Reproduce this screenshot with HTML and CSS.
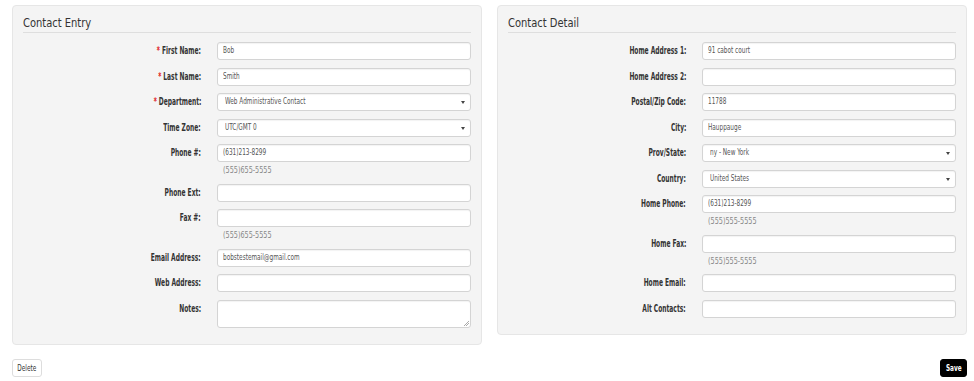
FILE: index.html
```html
<!DOCTYPE html>
<html>
<head>
<meta charset="utf-8">
<link rel="stylesheet" href="styles.css">
</head>
<body>
<div class="page">
  <div class="panels">
    <section class="panel">
      <h2 class="panel-title"><span class="cx">Contact Entry</span></h2>
      <div class="row"><label class="lbl"><span class="cx"><span class="req">*</span> First Name:</span></label><div class="ctl"><div class="input"><span class="cx">Bob</span></div></div></div>
      <div class="row"><label class="lbl"><span class="cx"><span class="req">*</span> Last Name:</span></label><div class="ctl"><div class="input"><span class="cx">Smith</span></div></div></div>
      <div class="row"><label class="lbl"><span class="cx"><span class="req">*</span> Department:</span></label><div class="ctl"><div class="input select"><span class="cx">Web Administrative Contact</span></div></div></div>
      <div class="row"><label class="lbl"><span class="cx">Time Zone:</span></label><div class="ctl"><div class="input select"><span class="cx">UTC/GMT 0</span></div></div></div>
      <div class="row"><label class="lbl"><span class="cx">Phone #:</span></label><div class="ctl"><div class="input"><span class="cx">(631)213-8299</span></div><div class="help"><span class="cx">(555)655-5555</span></div></div></div>
      <div class="row"><label class="lbl"><span class="cx">Phone Ext:</span></label><div class="ctl"><div class="input"></div></div></div>
      <div class="row"><label class="lbl"><span class="cx">Fax #:</span></label><div class="ctl"><div class="input"></div><div class="help"><span class="cx">(555)655-5555</span></div></div></div>
      <div class="row"><label class="lbl"><span class="cx">Email Address:</span></label><div class="ctl"><div class="input"><span class="cx">bobstestemail@gmail.com</span></div></div></div>
      <div class="row"><label class="lbl"><span class="cx">Web Address:</span></label><div class="ctl"><div class="input"></div></div></div>
      <div class="row"><label class="lbl"><span class="cx">Notes:</span></label><div class="ctl"><div class="input textarea"></div></div></div>
    </section>
    <section class="panel">
      <h2 class="panel-title"><span class="cx">Contact Detail</span></h2>
      <div class="row"><label class="lbl"><span class="cx">Home Address 1:</span></label><div class="ctl"><div class="input"><span class="cx">91 cabot court</span></div></div></div>
      <div class="row"><label class="lbl"><span class="cx">Home Address 2:</span></label><div class="ctl"><div class="input"></div></div></div>
      <div class="row"><label class="lbl"><span class="cx">Postal/Zip Code:</span></label><div class="ctl"><div class="input"><span class="cx">11788</span></div></div></div>
      <div class="row"><label class="lbl"><span class="cx">City:</span></label><div class="ctl"><div class="input"><span class="cx">Hauppauge</span></div></div></div>
      <div class="row"><label class="lbl"><span class="cx">Prov/State:</span></label><div class="ctl"><div class="input select"><span class="cx">ny - New York</span></div></div></div>
      <div class="row"><label class="lbl"><span class="cx">Country:</span></label><div class="ctl"><div class="input select"><span class="cx">United States</span></div></div></div>
      <div class="row"><label class="lbl"><span class="cx">Home Phone:</span></label><div class="ctl"><div class="input"><span class="cx">(631)213-8299</span></div><div class="help"><span class="cx">(555)555-5555</span></div></div></div>
      <div class="row"><label class="lbl"><span class="cx">Home Fax:</span></label><div class="ctl"><div class="input"></div><div class="help"><span class="cx">(555)555-5555</span></div></div></div>
      <div class="row"><label class="lbl"><span class="cx">Home Email:</span></label><div class="ctl"><div class="input"></div></div></div>
      <div class="row"><label class="lbl"><span class="cx">Alt Contacts:</span></label><div class="ctl"><div class="input"></div></div></div>
    </section>
  </div>
  <div class="actions">
    <button class="btn btn-default"><span class="cx">Delete</span></button>
    <button class="btn btn-dark"><span class="cx">Save</span></button>
  </div>
</div>
</body>
</html>
```
FILE: styles.css
```css
* { box-sizing: border-box; }
html, body { margin: 0; padding: 0; background: #fff; }
body {
  font-family: "DejaVu Sans Condensed", "Liberation Sans", sans-serif;
  font-stretch: condensed;
  color: #333;
}
.cx {
  display: inline-block;
  white-space: nowrap;
  transform-origin: left center;
}
.page { padding: 5px 7px 0 12px; }
.panels {
  display: grid;
  grid-template-columns: 470px 470px;
  column-gap: 15px;
  align-items: start;
}
.panel {
  background: #f4f4f4;
  border: 1px solid #e6e6e6;
  border-radius: 4px;
  padding: 10px 10px 9px 10px;
}
.panel-title {
  margin: 0 0 9px 0;
  font-size: 12px;
  font-weight: normal;
  line-height: 14px;
  color: #333;
  border-bottom: 1px solid #dedede;
  padding-bottom: 2px;
}
.panel-title .cx { transform: scaleX(0.92); }
.row {
  display: grid;
  grid-template-columns: 178px 1fr;
  column-gap: 16px;
  margin-bottom: 7.5px;
  align-items: start;
}
.lbl {
  text-align: right;
  font-size: 10px;
  font-weight: bold;
  line-height: 18px;
  height: 18px;
  color: #333;
}
.lbl .cx {
  transform: scaleX(0.66);
  transform-origin: right center;
}
.req { color: #e02020; }
.input {
  position: relative;
  height: 18px;
  background: #fff;
  border: 1px solid #d4d4d4;
  border-radius: 3px;
  box-shadow: inset 0 1px 1px rgba(0,0,0,0.05);
  font-size: 8px;
  line-height: 16px;
  padding: 0 5px;
  color: #555;
  overflow: hidden;
}
.input .cx { transform: scaleX(0.8); vertical-align: top; }
.select { padding-left: 7px; }
.textarea { height: 28px; overflow: visible; }
.textarea::after {
  content: "";
  position: absolute;
  right: 1px;
  bottom: 1px;
  width: 5px;
  height: 5px;
  background: linear-gradient(135deg, transparent 45%, #aaa 45%, #aaa 55%, transparent 55%, transparent 70%, #aaa 70%, #aaa 80%, transparent 80%);
}
.select::after {
  content: "";
  position: absolute;
  right: 5px;
  top: 7px;
  border-left: 2px solid transparent;
  border-right: 2px solid transparent;
  border-top: 3px solid #444;
}
.help {
  font-size: 9px;
  line-height: 12px;
  margin-top: 2px;
  padding-left: 6px;
  color: #888;
}
.help .cx { transform: scaleX(0.8); vertical-align: top; }
.actions {
  display: flex;
  justify-content: space-between;
  margin-top: 14px;
}
.btn {
  font-family: inherit;
  height: 18px;
  border-radius: 3px;
  font-size: 8px;
  padding: 0;
  cursor: pointer;
  display: flex;
  align-items: center;
  justify-content: center;
}
.btn .cx { transform: scaleX(0.8); transform-origin: center center; }
.btn-default {
  background: #fff;
  border: 1px solid #ddd;
  color: #333;
  width: 30px;
}
.btn-dark {
  background: #000;
  border: 1px solid #000;
  color: #fff;
  font-weight: bold;
  width: 27px;
}
```
